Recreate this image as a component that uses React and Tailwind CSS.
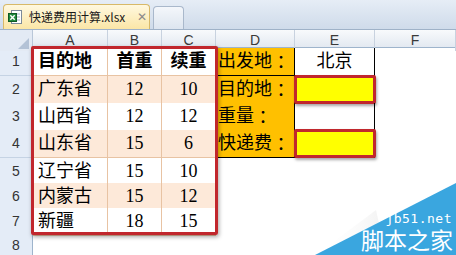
import React from 'react';

const cellFont = { fontFamily: '"Liberation Serif", "Noto Sans CJK SC", serif' };
const headFont = { fontFamily: '"Liberation Sans", Arial, sans-serif' };
const colonFont = { fontFamily: '"Noto Sans CJK TC", sans-serif' };

const rows = [
  { h: 'h-[28px]', a: '目的地', b: '首重', c: '续重', bold: true, tint: false, d: '出发地', e: '北京' },
  { h: 'h-[27px]', a: '广东省', b: '12', c: '10', tint: true, d: '目的地', box: true },
  { h: 'h-[27px]', a: '山西省', b: '12', c: '12', tint: false, d: '重量', e: '' },
  { h: 'h-[28px]', a: '山东省', b: '15', c: '6', tint: true, d: '快递费', box: true },
  { h: 'h-[25px]', a: '辽宁省', b: '15', c: '10', tint: false },
  { h: 'h-[25px]', a: '内蒙古', b: '15', c: '12', tint: true },
  { h: 'h-[25px]', a: '新疆', b: '18', c: '15', tint: false },
  { h: 'h-[25px]', empty: true },
];

const cols = ['A', 'B', 'C', 'D', 'E', 'F'];

const ExcelIcon = () => (
  <svg width="15" height="15" viewBox="0 0 15 15" className="shrink-0">
    <rect x="3.5" y="0.5" width="10" height="13" fill="#fff" stroke="#7d8a99" />
    <line x1="6" y1="4" x2="12" y2="4" stroke="#9fb3c8" />
    <line x1="6" y1="7" x2="12" y2="7" stroke="#9fb3c8" />
    <line x1="6" y1="10" x2="12" y2="10" stroke="#9fb3c8" />
    <rect x="0.5" y="3.5" width="8" height="8" fill="#1f8a3c" stroke="#0f5a24" />
    <path d="M2.3 5.2 L6.7 9.8 M6.7 5.2 L2.3 9.8" stroke="#fff" strokeWidth="1.4" />
  </svg>
);

export default function App() {
  return (
    <div className="relative w-[456px] h-[255px] overflow-hidden bg-white">
      {/* tab bar */}
      <div className="h-[30px] flex items-end bg-gradient-to-b from-[#e6edf6] to-[#cfdbea] border-b border-[#9fb2c8] pl-[3px] gap-[3px]">
        <div className="h-[25px] w-[147px] flex items-center gap-[6px] px-[4px] rounded-t-[4px] border border-b-0 border-[#d8b968] bg-gradient-to-b from-[#fff8df] to-[#fbe6a6]">
          <ExcelIcon />
          <span className="whitespace-nowrap text-[12px] text-[#1a1a1a]" style={{ fontFamily: '"Noto Sans CJK SC", "Liberation Sans", sans-serif' }}>
            快递费用计算.xlsx
          </span>
          <span className="ml-[6px] text-[12px] text-[#8a8a8a]" style={headFont}>✕</span>
        </div>
        <div className="h-[23px] w-[31px] rounded-t-[4px] border border-b-0 border-[#a9b8cb] bg-gradient-to-b from-[#f4f7fb] to-[#dde5ef]" />
      </div>

      {/* column headers */}
      <div className="grid grid-cols-[33px_75px_54px_54px_79px_80px_1fr] h-[18px] bg-gradient-to-b from-[#f8fafc] to-[#e3e9f1] border-b border-[#9eb4cc]" style={headFont}>
        <div className="relative border-r border-[#b9c7d8] bg-[#e3eaf4]">
          <div className="absolute right-[3px] bottom-[2px] w-0 h-0 border-l-[11px] border-l-transparent border-b-[11px] border-b-[#b3c2d6]" />
        </div>
        {cols.map((c) => (
          <div key={c} className="flex items-center justify-center border-r border-[#c8d2df] text-[14px] text-[#3a3a3a]">
            {c}
          </div>
        ))}
      </div>

      {/* body rows */}
      {rows.map((r, i) => (
        <div key={i} className={`grid grid-cols-[33px_75px_54px_54px_79px_80px_1fr] ${r.h}`} style={cellFont}>
          <div className="flex items-center justify-center bg-[#e4ecf7] border-r border-[#9eb4cc] border-b border-b-[#c5d3e4] text-[14px] text-[#333]" style={headFont}>
            {i + 1}
          </div>
          {r.empty ? (
            <>
              <div />
              <div />
              <div />
              <div />
              <div />
              <div />
            </>
          ) : (
            <>
              <div className={`flex items-center pl-[5px] border-r border-b border-[#e8c3a3] text-[18px] text-black ${r.tint ? 'bg-[#fde9d9]' : 'bg-white'} ${r.bold ? 'font-bold' : ''}`}>
                {r.a}
              </div>
              <div className={`flex items-center justify-center border-r border-b border-[#e8c3a3] text-[18px] text-black ${r.tint ? 'bg-[#fde9d9]' : 'bg-white'} ${r.bold ? 'font-bold' : ''}`}>
                {r.b}
              </div>
              <div className={`flex items-center justify-center border-r border-b border-[#e8c3a3] text-[18px] text-black ${r.tint ? 'bg-[#fde9d9]' : 'bg-white'} ${r.bold ? 'font-bold' : ''}`}>
                {r.c}
              </div>
              {r.d ? (
                <>
                  <div className="flex items-center pl-[2px] bg-[#ffc000] border-r border-b border-black text-[18px] text-black whitespace-nowrap">
                    {r.d}
                    <span style={colonFont}>：</span>
                  </div>
                  <div className="relative flex items-center justify-center border-r border-b border-black text-[18px] text-black">
                    {r.box ? (
                      <div className="absolute -left-[1px] -right-[2px] -top-[1px] -bottom-[1px] bg-[#ffff00] border-[3px] border-[#c1272d] rounded-[2px] shadow-[1px_2px_3px_rgba(0,0,0,0.35)]" />
                    ) : (
                      r.e
                    )}
                  </div>
                </>
              ) : (
                <>
                  <div />
                  <div />
                </>
              )}
              <div />
            </>
          )}
        </div>
      ))}

      {/* red selection frame around A1:C7 */}
      <div className="absolute left-[31px] top-[46px] w-[187px] h-[189px] border-[3px] border-[#c1272d] rounded-[2px] shadow-[1px_2px_4px_rgba(0,0,0,0.35)] pointer-events-none" />

      {/* watermark */}
      <svg className="absolute right-0 bottom-0" width="160" height="75" viewBox="0 0 160 75">
        <defs>
          <linearGradient id="fade" x1="0" y1="0" x2="1" y2="0">
            <stop offset="0" stopColor="#ffffff" stopOpacity="0" />
            <stop offset="1" stopColor="#e8e8e8" stopOpacity="0.6" />
          </linearGradient>
        </defs>
        <polygon points="20,75 80,30 90,75" fill="url(#fade)" />
        <polygon points="19,75 160,75 160,3" fill="#3aa6df" />
      </svg>
      <div className="absolute right-[4px] top-[213px] text-[13px] leading-[12px] text-white tracking-[0.5px]" style={{ fontFamily: '"DejaVu Sans Mono", "Liberation Mono", monospace' }}>
        jb51.net
      </div>
      <div className="absolute right-[3px] top-[227px] text-[23px] leading-[25px] text-white" style={{ fontFamily: '"Noto Sans CJK SC", sans-serif' }}>
        脚本之家
      </div>
    </div>
  );
}
